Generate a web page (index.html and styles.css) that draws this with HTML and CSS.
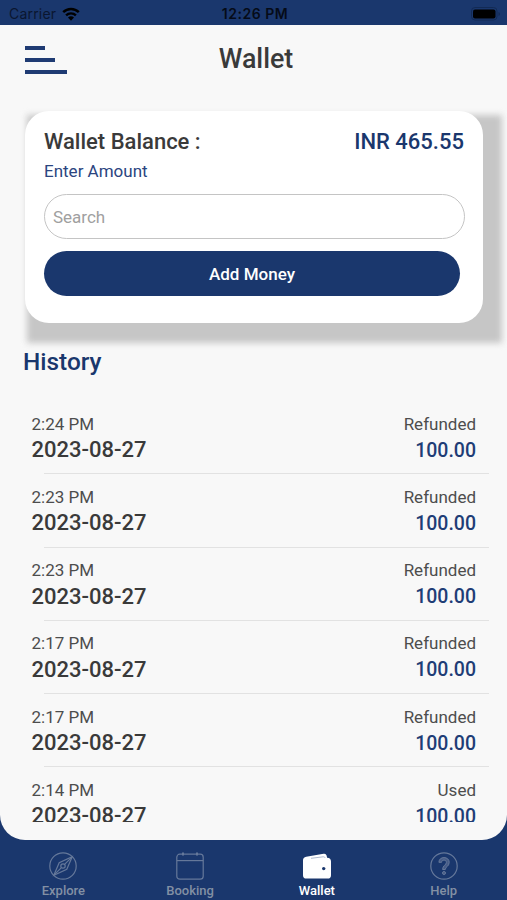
FILE: index.html
```html
<!DOCTYPE html>
<html lang="en">
<head>
  <meta charset="utf-8">
  <title>Wallet</title>
  <link rel="stylesheet" href="styles.css">
</head>
<body>
  <div class="app">
    <div class="statusBar">
      <div class="carrier">
        <span>Carrier</span>
        <svg class="wifi" width="18" height="14" viewBox="0 0 18 14">
          <path d="M1.2 5.2a11.2 11.2 0 0 1 15.6 0" fill="none" stroke="#000" stroke-width="2.5"/>
          <path d="M4.1 8.4a7 7 0 0 1 9.8 0" fill="none" stroke="#000" stroke-width="2.4"/>
          <path d="M9 13.8l-3-3.2a4.2 4.2 0 0 1 6 0z"/>
        </svg>
      </div>
      <div class="clock">12:26 PM</div>
      <svg class="battery" width="30" height="14" viewBox="0 0 30 14">
        <rect x=".5" y=".5" width="25.5" height="12.5" rx="3.5" fill="none" stroke="#122a55"/>
        <rect x="2" y="2.4" width="22.5" height="9" rx="2"/>
        <path d="M27.5 5v4q1.5-.5 1.5-2t-1.5-2" fill="#122a55"/>
      </svg>
    </div>

    <div class="page">
      <div class="header">
        <div class="menu">
          <span class="line short"></span>
          <span class="line middle"></span>
          <span class="line"></span>
        </div>
        <h1 class="title">Wallet</h1>
      </div>

      <div class="card-wrapper">
        <div class="card">
          <div class="balance">
            <span class="balanceLabel">Wallet Balance :</span>
            <span class="balanceValue">INR 465.55</span>
          </div>
          <div class="enterAmount">Enter Amount</div>
          <input class="amountInput" type="text" placeholder="Search">
          <button class="addMoney">Add Money</button>
        </div>
      </div>

      <h2 class="historyTitle">History</h2>
      <div class="history">
        <div class="record">
          <div class="row"><span class="time">2:24 PM</span><span class="status">Refunded</span></div>
          <div class="row"><span class="date">2023-08-27</span><span class="amount">100.00</span></div>
        </div>
        <div class="record">
          <div class="row"><span class="time">2:23 PM</span><span class="status">Refunded</span></div>
          <div class="row"><span class="date">2023-08-27</span><span class="amount">100.00</span></div>
        </div>
        <div class="record">
          <div class="row"><span class="time">2:23 PM</span><span class="status">Refunded</span></div>
          <div class="row"><span class="date">2023-08-27</span><span class="amount">100.00</span></div>
        </div>
        <div class="record">
          <div class="row"><span class="time">2:17 PM</span><span class="status">Refunded</span></div>
          <div class="row"><span class="date">2023-08-27</span><span class="amount">100.00</span></div>
        </div>
        <div class="record">
          <div class="row"><span class="time">2:17 PM</span><span class="status">Refunded</span></div>
          <div class="row"><span class="date">2023-08-27</span><span class="amount">100.00</span></div>
        </div>
        <div class="record">
          <div class="row"><span class="time">2:14 PM</span><span class="status">Used</span></div>
          <div class="row"><span class="date">2023-08-27</span><span class="amount">100.00</span></div>
        </div>
      </div>
    </div>

    <div class="tabBar">
      <div class="tab">
        <svg class="tabIcon" viewBox="0 0 28 28">
          <circle cx="14" cy="14" r="13.2"/>
          <path d="M23.2 4.8L17.8 17.2 4.8 23.2 10.2 10.8z"/>
          <path d="M23.2 4.8L15.8 12.2M4.8 23.2l7.4-7.4"/>
          <circle cx="14" cy="14" r="2.2"/>
        </svg>
        <span>Explore</span>
      </div>
      <div class="tab">
        <svg class="tabIcon" viewBox="0 0 28 28">
          <rect x=".8" y="2.2" width="26.4" height="25" rx="3"/>
          <path d="M.8 8.600h26.400"/>
          <path class="ring" d="M7 .6v3M21 .6v3"/>
        </svg>
        <span>Booking</span>
      </div>
      <div class="tab on">
        <svg class="tabIcon" viewBox="0 0 28 28">
          <path class="fill" d="M3.2 4.7L20.6 1.8q2.4-.4 3 1.8l.5 2.2q3.9.3 3.9 3.600v13.800q0 3.400-3.400 3.400H3.400Q0 26.600 0 23.200V8.200Q0 5.200 3.200 4.700z"/>
          <path class="slit" d="M8 6.300l12.300-1.500q1.400-.1 1.800 1"/>
          <circle class="dot" cx="20.700" cy="16.600" r="1.700"/>
        </svg>
        <span>Wallet</span>
      </div>
      <div class="tab">
        <svg class="tabIcon" viewBox="0 0 28 28">
          <circle cx="14" cy="14" r="13.2"/>
          <path class="mark" d="M8.900 10.300C9 7.200 11.200 5.600 14 5.600c3 0 5.200 1.900 5.200 4.700 0 4.400-3.900 4.200-3.900 7.200h-2.700c0-4.200 3.800-4.500 3.800-7 0-1.500-1-2.400-2.400-2.400-1.500 0-2.300.8-2.400 2.200z"/>
          <circle class="mark" cx="14" cy="21" r="1.500"/>
        </svg>
        <span>Help</span>
      </div>
    </div>
  </div>
</body>
</html>
```
FILE: styles.css
```css
* {
  margin: 0;
  padding: 0;
  box-sizing: border-box;
}
body {
  font-family: Roboto, "Liberation Sans", sans-serif;
  color: #3a3a3a;
  background-color: #1a376d;
}
.app {
  display: flex;
  flex-direction: column;
  width: 507px;
  height: 900px;
  overflow: hidden;
}

/* status bar */
.statusBar {
  display: grid;
  grid-template-columns: 1fr auto 1fr;
  align-items: center;
  height: 25px;
  padding: 2px 6px 0 9px;
  font-family: Inter, "Liberation Sans", sans-serif;
  font-size: 14px;
  color: #0a1630;
}
.carrier {
  display: flex;
  align-items: center;
  gap: 6px;
  letter-spacing: .2px;
}
.clock {
  font-weight: 600;
  letter-spacing: .5px;
  color: #050b18;
}
.battery {
  justify-self: end;
}

/* page */
.page {
  display: flex;
  flex-direction: column;
  height: 815px;
  background-color: #f8f8f8;
  border-radius: 0 0 25px 25px;
  overflow: hidden;
}
.header {
  display: grid;
  grid-template-columns: 1fr auto 1fr;
  align-items: center;
  height: 69px;
  padding: 0 20px 0 25px;
}
.menu {
  display: flex;
  flex-direction: column;
  gap: 8px;
}
.line {
  width: 42px;
  height: 4px;
  background-color: #1f3b73;
}
.line.middle {
  width: 30px;
}
.line.short {
  width: 20px;
}
.title {
  padding-bottom: 1px;
  font-size: 26.8px;
  font-weight: 500;
}
.card-wrapper {
  position: relative;
  margin: 17px 24px 0 25px;
}
.card-wrapper::before {
  content: '';
  position: absolute;
  top: 4px;
  left: 2px;
  right: -19px;
  bottom: -20px;
  background-color: #c6c6c6;
  filter: blur(3px);
}
.card {
  position: relative;
  height: 212px;
  padding: 17px 19px 0;
  border-radius: 24px;
  background-color: #fff;
}
.balance {
  display: flex;
  justify-content: space-between;
  line-height: 28px;
  font-size: 22px;
  font-weight: 500;
}
.balanceValue {
  color: #1a376d;
}
.enterAmount {
  line-height: 30px;
  font-size: 17px;
  color: #2b4580;
}
.amountInput {
  display: block;
  width: 421px;
  height: 45px;
  margin-top: 8px;
  padding: 0 8px;
  border: 1px solid #c4c4c4;
  border-radius: 23px;
  outline: none;
  font-family: inherit;
  font-size: 17px;
}
.amountInput::placeholder {
  color: #a0a0a0;
}
.addMoney {
  display: block;
  width: 416px;
  height: 45px;
  margin-top: 12px;
  border: none;
  border-radius: 23px;
  font-family: inherit;
  font-size: 17px;
  font-weight: 500;
  color: #fff;
  background-color: #1a376d;
}

/* history */
.historyTitle {
  position: relative;
  margin: 23px 0 0 23px;
  line-height: 32px;
  font-size: 24.4px;
  font-weight: 500;
  color: #1a376d;
}
.history {
  height: 421px;
  margin-top: 23px;
  padding-left: 31.5px;
  overflow: hidden;
}
.record {
  height: 73.3px;
  padding: 10.5px 31px 0 0;
  background: linear-gradient(#e2e2e2, #e2e2e2) 12px 100% / 445px 1px no-repeat;
}
.row {
  display: flex;
  justify-content: space-between;
  align-items: center;
  height: 24px;
}
.row + .row {
  height: 28px;
}
.time,
.status {
  font-size: 17px;
  color: #4d4d4d;
}
.date {
  font-size: 22px;
  font-weight: 500;
}
.amount {
  padding-top: 1px;
  font-size: 19.5px;
  font-weight: 500;
  color: #1f3d76;
}

/* tab bar */
.tabBar {
  display: flex;
  height: 60px;
  padding: 12px 0 0;
}
.tab {
  flex: 1;
  display: flex;
  flex-direction: column;
  align-items: center;
  gap: 3px;
  font-size: 13px;
  line-height: 16px;
  font-weight: 500;
  color: #8290a4;
}
.tabIcon {
  width: 28px;
  height: 28px;
  fill: none;
  stroke: #65789a;
  stroke-width: 1.2;
}
.ring {
  stroke-width: 2;
}
.mark {
  fill: #465c88;
  stroke-width: 1;
}
.tab.on {
  color: #fff;
}
.tab.on .fill {
  fill: #fff;
  stroke: none;
}
.tab.on .slit {
  stroke: #9aa8c2;
  stroke-width: .8;
}
.tab.on .dot {
  fill: #1a376d;
  stroke: none;
}
```
